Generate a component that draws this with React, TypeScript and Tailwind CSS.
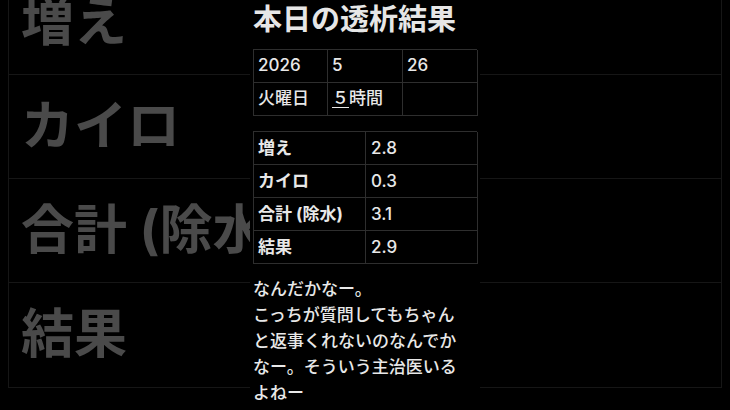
const fontStack = "font-['Inter','Noto_Sans_CJK_JP',sans-serif]";

const bgRows = ["増え", "カイロ", "合計 (除水)", "結果"];

const dateCells = [
  ["2026", "5", "26"],
  ["火曜日", "", ""],
];

const results = [
  { label: "増え", value: "2.8" },
  { label: "カイロ", value: "0.3" },
  { label: "合計 (除水)", value: "3.1" },
  { label: "結果", value: "2.9" },
];

function BackgroundTable() {
  // blurred, enlarged copy of the result table behind the video frame
  return (
    <div className="ml-[8px] mt-[-29px] w-[714px] border-x border-b border-[#161616]">
      {bgRows.map((label) => (
        <div
          key={label}
          className="flex h-[104px] items-center border-b border-[#161616] last:border-b-0"
        >
          <span className="whitespace-nowrap pl-[12px] text-[53px] font-bold text-[#4a4a4a]">
            {label}
          </span>
        </div>
      ))}
    </div>
  );
}

function DateTable() {
  return (
    <div className="mt-[9px] w-[224px] border-l border-t border-[#2e2e2e]">
      {dateCells.map((row, r) => (
        <div key={r} className="grid grid-cols-[74px_75px_75px]">
          {row.map((cell, c) => (
            <div
              key={c}
              className="flex h-[33px] items-center border-b border-r border-[#2e2e2e] pl-[4px] text-[17px] font-medium text-[#e8e8e8]"
            >
              {r === 1 && c === 1 ? (
                <span>
                  <span className="underline decoration-1 underline-offset-[3px]">５</span>時間
                </span>
              ) : (
                cell
              )}
            </div>
          ))}
        </div>
      ))}
    </div>
  );
}

function ResultTable() {
  return (
    <div className="mt-[15px] w-[224px] border-l border-t border-[#2e2e2e]">
      {results.map((row) => (
        <div key={row.label} className="grid grid-cols-[112px_112px]">
          <div className="flex h-[33px] items-center border-b border-r border-[#2e2e2e] pl-[4px] text-[17px] font-bold leading-none text-[#e8e8e8]">
            {row.label}
          </div>
          <div className="flex h-[33px] items-center border-b border-r border-[#2e2e2e] pl-[5px] text-[17px] font-medium leading-none text-[#e8e8e8]">
            {row.value}
          </div>
        </div>
      ))}
    </div>
  );
}

export default function App() {
  return (
    <div className={`relative h-[410px] w-[730px] overflow-hidden bg-black ${fontStack}`}>
      <BackgroundTable />

      <div className="absolute left-[250px] top-0 h-full w-[230px] bg-black pl-[3px]">
        <h1 className="text-[29px] font-bold leading-[40px] text-[#e6e6e6]">本日の透析結果</h1>
        <DateTable />
        <ResultTable />
        <div className="mt-[12px] w-[214px] text-[17px] font-medium leading-[26px] text-[#e8e8e8]">
          <p>なんだかなー。</p>
          <p>こっちが質問してもちゃんと返事くれないのなんでかなー。そういう主治医いるよねー</p>
        </div>
      </div>
    </div>
  );
}
